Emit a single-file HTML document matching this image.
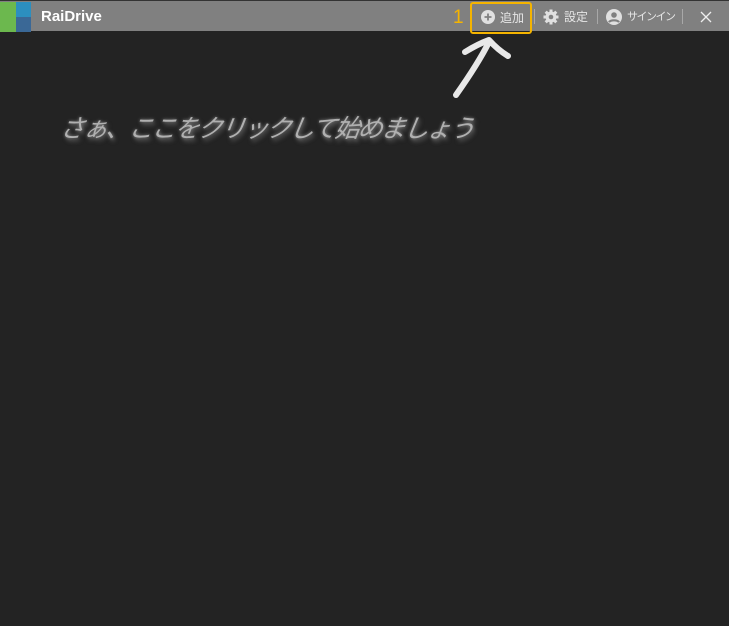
<!DOCTYPE html>
<html><head><meta charset="utf-8"><style>
html,body{margin:0;padding:0;width:729px;height:626px;background:#232323;overflow:hidden;font-family:"Liberation Sans","Noto Sans CJK JP",sans-serif;}
.bar{position:absolute;left:0;top:0;width:729px;height:31px;background:#808080;border-top:1px solid #333;box-sizing:border-box;}
.g{position:absolute;left:0;top:1px;width:16px;height:30px;background:#6cb84e}
.b1{position:absolute;left:16px;top:1px;width:15px;height:15px;background:#2c8fbf}
.b2{position:absolute;left:16px;top:16px;width:15px;height:15px;background:#3a6896}
.title{position:absolute;left:41px;top:7px;color:#fff;font-weight:bold;font-size:15px}
.it{position:absolute;top:8px;color:#e6e6e6;font-size:12px}
.sep{position:absolute;top:8px;width:1px;height:15px;background:#a8a8a8}
.box{position:absolute;left:470px;top:2px;width:58px;height:28px;border:2px solid #f5b400;border-radius:3px}
.one{position:absolute;left:453px;top:7px;color:#f5b400;font-size:19px}
.msg{position:absolute;left:58px;top:109px;font-size:25px;font-style:italic;color:#b0b0b0;text-shadow:0 0 3px #888,2px 3px 4px #666;letter-spacing:-2px;transform:skewX(-8deg);transform-origin:left bottom}
</style></head><body>
<div class="bar">
<div class="g"></div><div class="b1"></div><div class="b2"></div>
<div class="title">RaiDrive</div>
<svg style="position:absolute;left:481px;top:9px" width="14" height="14"><circle cx="7" cy="7" r="7" fill="#e0e0e0"/><path d="M7 3.5v7M3.5 7h7" stroke="#808080" stroke-width="1.8"/></svg>
<div class="it" style="left:500px">追加</div>
<div class="sep" style="left:534px"></div>
<svg style="position:absolute;left:543px;top:8px" width="16" height="16" viewBox="0 0 16 16"><g fill="#e0e0e0"><circle cx="8" cy="8" r="5.5"/><rect x="6.5" y="0.5" width="3" height="15"/><rect x="0.5" y="6.5" width="15" height="3"/><rect x="6.5" y="0.5" width="3" height="15" transform="rotate(45 8 8)"/><rect x="6.5" y="0.5" width="3" height="15" transform="rotate(-45 8 8)"/></g><circle cx="8" cy="8" r="2.3" fill="#808080"/></svg>
<div class="it" style="left:564px;top:7px">設定</div>
<div class="sep" style="left:597px"></div>
<svg style="position:absolute;left:606px;top:8px" width="16" height="16"><circle cx="8" cy="8" r="8" fill="#e0e0e0"/><circle cx="8" cy="6" r="2.8" fill="#808080"/><path d="M3 13.2c1.5-2.5 8.5-2.5 10 0" stroke="#808080" stroke-width="2.2" fill="none"/></svg>
<div class="it" style="left:627px;top:7px;font-size:11px;letter-spacing:-1.5px">サインイン</div>
<div class="sep" style="left:682px"></div>
<svg style="position:absolute;left:700px;top:10px" width="12" height="12"><path d="M1 1L11 11M11 1L1 11" stroke="#eee" stroke-width="1.3"/></svg>
</div>
<div class="box"></div>
<div class="one">1</div>
<svg style="position:absolute;left:440px;top:30px" width="90" height="75"><g stroke="#e8e8e8" stroke-width="6" stroke-linecap="round" stroke-linejoin="round" fill="none"><path d="M16 65 C28 48 40 30 49 12"/><path d="M25 22 Q38 14 49 10 Q58 20 68 26"/></g></svg>
<div class="msg">さぁ、ここをクリックして始めましょう</div>
</body></html>
